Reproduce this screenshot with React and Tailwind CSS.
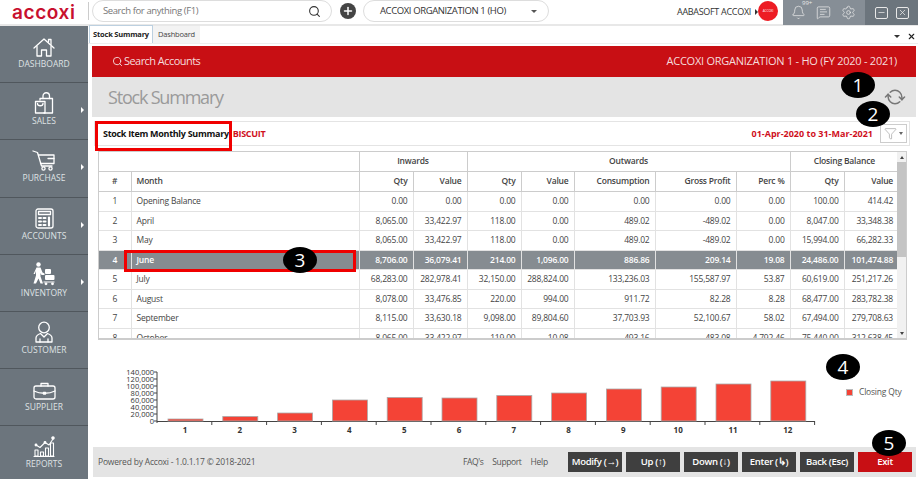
import React from 'react';
import { Search, Plus, Bell, MessageSquareText, Settings, Minus, X, RefreshCw, Funnel } from 'lucide-react';

const Line = ({ w, h, children, fill = 'none', sw = 1.3 }) => (
  <svg width={w} height={h} viewBox={`0 0 ${w} ${h}`} fill={fill} stroke="white" strokeWidth={sw} strokeLinejoin="round" strokeLinecap="round">
    {children}
  </svg>
);

const HomeIcon = () => (
  <Line w={22} h={19}>
    <path d="M1 10L11 1l10 9" />
    <path d="M15.500 4V1.500H18V6.500" />
    <path d="M4 8.500V18h4.500v-6h5v6H18V8.500" />
  </Line>
);

const SalesIcon = () => (
  <Line w={20} h={22}>
    <path d="M6 8V6.500h12.500V21H10" />
    <path d="M9 6.500V4a3 3 0 0 1 6.500 0v2.500" />
    <path d="M1.500 9.500H11V21H1.500z" />
    <path d="M3.500 11.500c0 3 5.500 3 5.500 0" />
  </Line>
);

const CartIcon = () => (
  <Line w={24} h={21}>
    <path d="M1 1l4.500 1.500L9.500 16H20" />
    <path d="M6.500 5H22v8.500l-13.500 0" />
    <path d="M16 8.500h6" />
    <circle cx="11.500" cy="18.500" r="1.600" />
    <circle cx="18.500" cy="18.500" r="1.600" />
  </Line>
);

const CalcIcon = () => (
  <Line w={19} h={21}>
    <rect x="1" y="1" width="17" height="19" rx="2" />
    <rect x="3.500" y="3.500" width="12" height="3" />
    <path d="M4 10h2M8.500 10h2M4 13.500h2M8.500 13.500h2M4 17h2M8.500 17h2" strokeWidth="2" />
    <path d="M14 9.500v8" strokeWidth="2.200" />
  </Line>
);

const InventoryIcon = () => (
  <svg width="24" height="24" viewBox="0 0 24 24" fill="white">
    <circle cx="6.500" cy="2.500" r="2.200" />
    <path d="M4.500 5.500h4l2 5 2 1v1.500h-3L8.500 11v3.500l2.500 7H8.500l-2-5-2.500 5H1.500l2.500-8V9L3 12H1.500z" />
    <rect x="13" y="7" width="6" height="5" rx="1" />
    <rect x="13" y="13" width="9.500" height="5" rx="1" />
    <path d="M11.500 19.500h11v1h-11z" />
    <circle cx="14" cy="21.800" r="1.400" />
    <circle cx="20.500" cy="21.800" r="1.400" />
  </svg>
);

const CustomerIcon = () => (
  <Line w={18} h={22}>
    <circle cx="9" cy="6.500" r="5.300" />
    <path d="M5.500 12.500C3 13.500 1 14.500 1 17v4h16v-4c0-2.500-2-3.500-4.500-4.500L9 16z" />
    <path d="M5 21v-3M13 21v-3" />
  </Line>
);

const BriefcaseIcon = () => (
  <Line w={23} h={18}>
    <rect x="1" y="4" width="21" height="13" rx="2" />
    <path d="M8 4V1.500h7V4" />
    <path d="M1 9c6 3 15 3 21 0" />
    <path d="M10.500 10.500h2v1.500h-2z" />
  </Line>
);

const ReportsIcon = () => (
  <Line w={22} h={22} sw={1.1}>
    <path d="M3 10l4 2.500 5-5 4 2.500 4-6" />
    <circle cx="3" cy="10" r="0.900" fill="white" />
    <circle cx="12" cy="7.500" r="0.900" fill="white" />
    <circle cx="20" cy="3" r="1.200" fill="white" />
    <path d="M2 15h3v6H2zM7.500 17h3v4h-3zM12.500 13h3v8h-3zM17.500 8h3v13h-3z" />
    <path d="M1 21.500h20" />
  </Line>
);

const navItems = [
  { label: 'DASHBOARD', icon: <HomeIcon /> },
  { label: 'SALES', icon: <SalesIcon />, arrow: true },
  { label: 'PURCHASE', icon: <CartIcon />, arrow: true },
  { label: 'ACCOUNTS', icon: <CalcIcon />, arrow: true },
  { label: 'INVENTORY', icon: <InventoryIcon />, arrow: true },
  { label: 'CUSTOMER', icon: <CustomerIcon /> },
  { label: 'SUPPLIER', icon: <BriefcaseIcon /> },
  { label: 'REPORTS', icon: <ReportsIcon /> },
];

const rows = [
  ['1', 'Opening Balance', '0.00', '0.00', '0.00', '0.00', '0.00', '0.00', '0.00', '100.00', '414.42'],
  ['2', 'April', '8,065.00', '33,422.97', '118.00', '0.00', '489.02', '-489.02', '0.00', '8,047.00', '33,348.38'],
  ['3', 'May', '8,065.00', '33,422.97', '118.00', '0.00', '489.02', '-489.02', '0.00', '15,994.00', '66,282.33'],
  ['4', 'June', '8,706.00', '36,079.41', '214.00', '1,096.00', '886.86', '209.14', '19.08', '24,486.00', '101,474.88'],
  ['5', 'July', '68,283.00', '282,978.41', '32,150.00', '288,824.00', '133,236.03', '155,587.97', '53.87', '60,619.00', '251,217.26'],
  ['6', 'August', '8,078.00', '33,476.85', '220.00', '994.00', '911.72', '82.28', '8.28', '68,477.00', '283,782.38'],
  ['7', 'September', '8,115.00', '33,630.18', '9,098.00', '89,804.60', '37,703.93', '52,100.67', '58.02', '67,494.00', '279,708.63'],
  ['8', 'October', '8,065.00', '33,422.97', '119.00', '10.08', '493.16', '-483.08', '-4,792.46', '75,440.00', '312,638.45'],
];

const colWidths = [32, 228, 54, 54, 54, 53, 81, 81, 54, 54, 54];
const subHeads = ['Qty', 'Value', 'Qty', 'Value', 'Consumption', 'Gross Profit', 'Perc %', 'Qty', 'Value'];
const barHeights = [2, 4.5, 8, 21, 23.5, 23, 25.5, 28, 32, 34, 37, 40];
const yTicks = ['140,000', '120,000', '100,000', '80,000', '60,000', '40,000', '20,000', '0'];
const footerButtons = ['Modify (→)', 'Up (↑)', 'Down (↓)', 'Enter (↳)', 'Back (Esc)'];

const Badge = ({ className, children }) => (
  <div className={`absolute flex h-[26px] w-[34px] items-center justify-center rounded-[50%] bg-black text-[19px] leading-none text-white ${className}`}>
    {children}
  </div>
);

const Chart = () => (
  <svg width="754" height="105" viewBox="0 0 754 105" className="block shrink-0">
    {yTicks.map((t, i) => (
      <g key={t}>
        <text x="62" y={34.5 + i * 7} textAnchor="end" fontSize="7.500" fill="#333">{t}</text>
        <line x1="62" x2="65" y1={32 + i * 7} y2={32 + i * 7} stroke="#444" />
      </g>
    ))}
    <line x1="65" x2="65" y1="32" y2="83" stroke="#444" />
    <line x1="65" x2="723" y1="81.500" y2="81.500" stroke="#444" />
    {barHeights.map((h, i) => (
      <g key={i}>
        <rect x={76 + i * 54.8} y={81 - h} width="35" height={h} fill="#f44336" stroke="#aaa" strokeWidth="0.800" />
        <line x1={65 + (i + 1) * 54.8} x2={65 + (i + 1) * 54.8} y1="81" y2="85" stroke="#444" />
        <text x={93 + i * 54.8} y="93" textAnchor="middle" fontSize="8" fontWeight="700" fill="#333">{i + 1}</text>
      </g>
    ))}
  </svg>
);

export default function App() {
  return (
    <div className="relative flex h-[479px] w-[918px] flex-col overflow-hidden bg-white font-['Open_Sans',sans-serif] text-[#444]">
      {/* top bar */}
      <div className="flex h-[26px] shrink-0 items-start whitespace-nowrap border-b-2 border-[#e8e8e8]">
        <div className="flex h-[24px] w-[88px] shrink-0 items-center pl-[12px] font-['Inter',sans-serif] text-[19px] font-semibold leading-none tracking-[0.6px] text-[#c8102e]">
          accoxi
        </div>
        <div className="mt-[2px] h-[18px] w-px shrink-0 bg-[#ccc]" />
        <div className="ml-[3px] flex h-[22px] w-[240px] shrink-0 items-center justify-between rounded-full border border-[#ddd] px-[10px] text-[9.500px] tracking-[-0.4px] text-[#777]">
          Search for anything (F1)
          <Search size={13} className="text-[#333]" />
        </div>
        <div className="ml-[8px] mt-[3px] flex h-[16px] w-[16px] shrink-0 items-center justify-center rounded-full bg-[#444] text-white">
          <Plus size={12} strokeWidth={3} />
        </div>
        <div className="ml-[7px] flex h-[22px] w-[186px] shrink-0 items-center justify-between rounded-full border border-[#ddd] pl-[16px] pr-[11px] text-[9.500px] tracking-[-0.4px] text-[#333]">
          ACCOXI ORGANIZATION 1 (HO)
          <span className="h-0 w-0 border-x-[3px] border-t-[3px] border-x-transparent border-t-[#555]" />
        </div>
        <div className="ml-[128px] flex h-[24px] w-[79px] shrink-0 items-center text-[9px] tracking-[-0.3px] text-[#333]">
          AABASOFT ACCOXI
          <span className="ml-[4px] h-0 w-0 border-y-[3px] border-l-[3px] border-y-transparent border-l-[#333]" />
        </div>
        <div className="ml-[2px] mt-[1px] flex h-[20px] w-[20px] shrink-0 items-center justify-center rounded-full bg-[#ed1c24] text-[3px] text-white">
          ACCOXI
        </div>
        <div className="relative ml-[5px] flex h-[25px] w-[82px] shrink-0 items-center gap-[10px] bg-[#868e96] pl-[8px] text-[#e8e8e8]">
          <Bell size={15} strokeWidth={1.2} />
          <span className="absolute left-[19px] top-0 text-[6px] leading-none">99+</span>
          <MessageSquareText size={15} strokeWidth={1.2} />
          <Settings size={15} strokeWidth={1.2} />
        </div>
        <div className="flex h-[25px] w-[53px] shrink-0 items-center justify-center gap-[8px] bg-[#6c757d] text-[#e8e8e8]">
          <span className="flex h-[12px] w-[13px] items-center justify-center rounded-[2px] border border-[#e8e8e8]"><Minus size={9} /></span>
          <span className="flex h-[12px] w-[13px] items-center justify-center rounded-[2px] border border-[#e8e8e8]"><X size={9} /></span>
        </div>
      </div>

      <div className="flex min-h-0 flex-1">
        {/* sidebar */}
        <div className="w-[88px] shrink-0 bg-[#6c757d]">
          {navItems.map((item) => (
            <div key={item.label} className="relative flex h-[57.200px] flex-col items-center border-b border-[#50575d] text-white">
              <div className="flex h-[31px] items-end justify-center">{item.icon}</div>
              <span className="mt-[1px] text-[8.500px] leading-[12px] text-[#dfe2e4]">{item.label}</span>
              {item.arrow && <span className="absolute right-[4px] top-[24px] h-0 w-0 border-y-[3px] border-l-[3px] border-y-transparent border-l-white" />}
            </div>
          ))}
        </div>

        {/* main */}
        <div className="flex min-w-0 flex-1 flex-col">
          <div className="flex h-[18px] shrink-0 items-end border-b border-[#eee] pl-[1px] text-[7.500px] tracking-[-0.2px]">
            <div className="flex h-[18px] w-[64px] items-center justify-center border-x border-t border-[#bcd0e0] font-bold text-[#222]">Stock Summary</div>
            <div className="flex h-[17px] w-[47px] items-center justify-center bg-[#f3f3f3] text-[#444]">Dashboard</div>
            <div className="ml-auto flex items-center gap-[7px] pb-[2px] pr-[2px]">
              <span className="h-0 w-0 border-x-[3px] border-t-[3px] border-x-transparent border-t-[#333]" />
              <X size={9} strokeWidth={3} className="text-[#222]" />
            </div>
          </div>

          <div className="ml-[4px] mr-[2px] mt-[2px] flex min-h-0 flex-1 flex-col">
            <div className="flex h-[31px] shrink-0 items-center justify-between bg-[#c80f14] pl-[20px] pr-[19px] text-[11px] tracking-[-0.55px] text-[#f5dcdc]">
              <div className="flex items-center gap-[1px]"><Search size={11} />Search Accounts</div>
              <div className="tracking-[-0.25px]">ACCOXI ORGANIZATION 1 - HO (FY 2020 - 2021)</div>
            </div>
            <div className="flex h-[40px] shrink-0 items-center justify-between bg-[#e4e4e4] pl-[16px] pr-[12px] text-[18px] tracking-[-1.2px] text-[#9a9a9a]">
              Stock Summary
              <RefreshCw size={18} strokeWidth={2} className="rotate-45 text-[#777]" />
            </div>

            <div className="ml-[2px] mr-[6px] mt-[4px] flex h-[25px] shrink-0 items-center border border-[#e4e4e4] pl-[8px] pr-[2px] text-[9px]">
              <span className="font-bold tracking-[-0.3px] text-[#111]">Stock Item Monthly Summary</span>
              <span className="ml-[4px] font-bold tracking-[-0.3px] text-[#d0101c]">BISCUIT</span>
              <span className="ml-auto font-bold text-[#d0101c]">01-Apr-2020 to 31-Mar-2021</span>
              <div className="ml-[7px] flex h-[19px] w-[27px] items-center justify-center gap-[2px] border border-[#ccc] text-[#888]">
                <Funnel size={13} strokeWidth={1} />
                <span className="h-0 w-0 border-x-[2.500px] border-t-[3px] border-x-transparent border-t-[#666]" />
              </div>
            </div>

            <div className="ml-[6px] mr-[9px] mt-[5px] flex h-[189px] shrink-0 border-x border-b-2 border-t border-[#ccc]">
              <div className="h-full w-[799px] overflow-hidden">
                <table className="w-[799px] table-fixed border-collapse text-[8.500px] leading-none tracking-[-0.2px]">
                  <colgroup>
                    {colWidths.map((w, i) => <col key={i} style={{ width: w }} />)}
                  </colgroup>
                  <thead className="text-[#444]">
                    <tr className="h-[19.500px]">
                      <th colSpan={2} className="border-b border-r border-[#ccc]" />
                      <th colSpan={2} className="border-b border-r border-[#ccc] font-semibold">Inwards</th>
                      <th colSpan={5} className="border-b border-r border-[#ccc] font-semibold">Outwards</th>
                      <th colSpan={2} className="border-b border-[#ccc] font-semibold">Closing Balance</th>
                    </tr>
                    <tr className="h-[20px]">
                      <th className="border-b border-r border-[#ccc] font-semibold">#</th>
                      <th className="border-b border-r border-[#ccc] pl-[5px] text-left font-semibold">Month</th>
                      {subHeads.map((h, i) => (
                        <th key={i} className="border-b border-r border-[#ccc] pr-[5px] text-right font-semibold last:border-r-0">{h}</th>
                      ))}
                    </tr>
                  </thead>
                  <tbody>
                    {rows.map((row) => {
                      const active = row[0] === '4';
                      return (
                        <tr key={row[0]} className={`h-[19.500px] ${active ? 'bg-[#868c91] font-semibold text-white' : 'text-[#444]'}`}>
                          {row.map((cell, i) => (
                            <td
                              key={i}
                              className={`whitespace-nowrap border-b border-r border-[#e2e2e2] last:border-r-0 ${i === 0 ? 'text-center' : i === 1 ? 'pl-[5px]' : 'pr-[5px] text-right'}`}
                            >
                              {cell}
                            </td>
                          ))}
                        </tr>
                      );
                    })}
                  </tbody>
                </table>
              </div>
              <div className="flex w-[9px] shrink-0 flex-col bg-[#f1f1f1]">
                <div className="flex h-[10px] items-center justify-center"><span className="h-0 w-0 border-x-[2.500px] border-b-[3px] border-x-transparent border-b-[#444]" /></div>
                <div className="h-[95px] bg-[#c4c4c4]" />
                <div className="mt-auto flex h-[10px] items-center justify-center"><span className="h-0 w-0 border-x-[2.500px] border-t-[3px] border-x-transparent border-t-[#444]" /></div>
              </div>
            </div>

            <div className="flex min-h-0 flex-1">
              <Chart />
              <div className="mt-[47px] flex h-[10px] items-center gap-[6px] whitespace-nowrap text-[8.500px] tracking-[-0.2px] text-[#555]">
                <span className="h-[7px] w-[7px] border border-[#bbb] bg-[#f44336]" />
                Closing Qty
              </div>
            </div>

            <div className="mb-[2px] ml-[1px] flex h-[30px] shrink-0 items-center whitespace-nowrap bg-[#e4e4e4] pl-[5px] pr-[4px] text-[8.500px] tracking-[-0.2px] text-[#555]">
              Powered by Accoxi - 1.0.1.17 © 2018-2021
              <span className="ml-auto tracking-[-0.4px]">FAQ's</span>
              <span className="ml-[9px] tracking-[-0.4px]">Support</span>
              <span className="ml-[9px]">Help</span>
              <div className="ml-[20px] flex items-center gap-[4px] text-[9.500px] font-semibold tracking-[-0.3px]">
                {footerButtons.map((b) => (
                  <div key={b} className="flex h-[20px] w-[54px] items-center justify-center bg-[#3f3f3f] text-white">{b}</div>
                ))}
                <div className="flex h-[20px] w-[54px] items-center justify-center bg-[#c80f14] text-white">Exit</div>
              </div>
            </div>
          </div>
        </div>
      </div>

      {/* annotations */}
      <div className="absolute left-[95px] top-[121px] h-[30px] w-[137px] border-[3px] border-[#f00000]" />
      <div className="absolute left-[124px] top-[250px] h-[22px] w-[232px] border-[3px] border-[#f00000]" />
      <Badge className="left-[841px] top-[72px]">1</Badge>
      <Badge className="left-[856px] top-[101px]">2</Badge>
      <Badge className="left-[283px] top-[247px]">3</Badge>
      <Badge className="left-[826px] top-[354px]">4</Badge>
      <Badge className="left-[872px] top-[430px]">5</Badge>
    </div>
  );
}
